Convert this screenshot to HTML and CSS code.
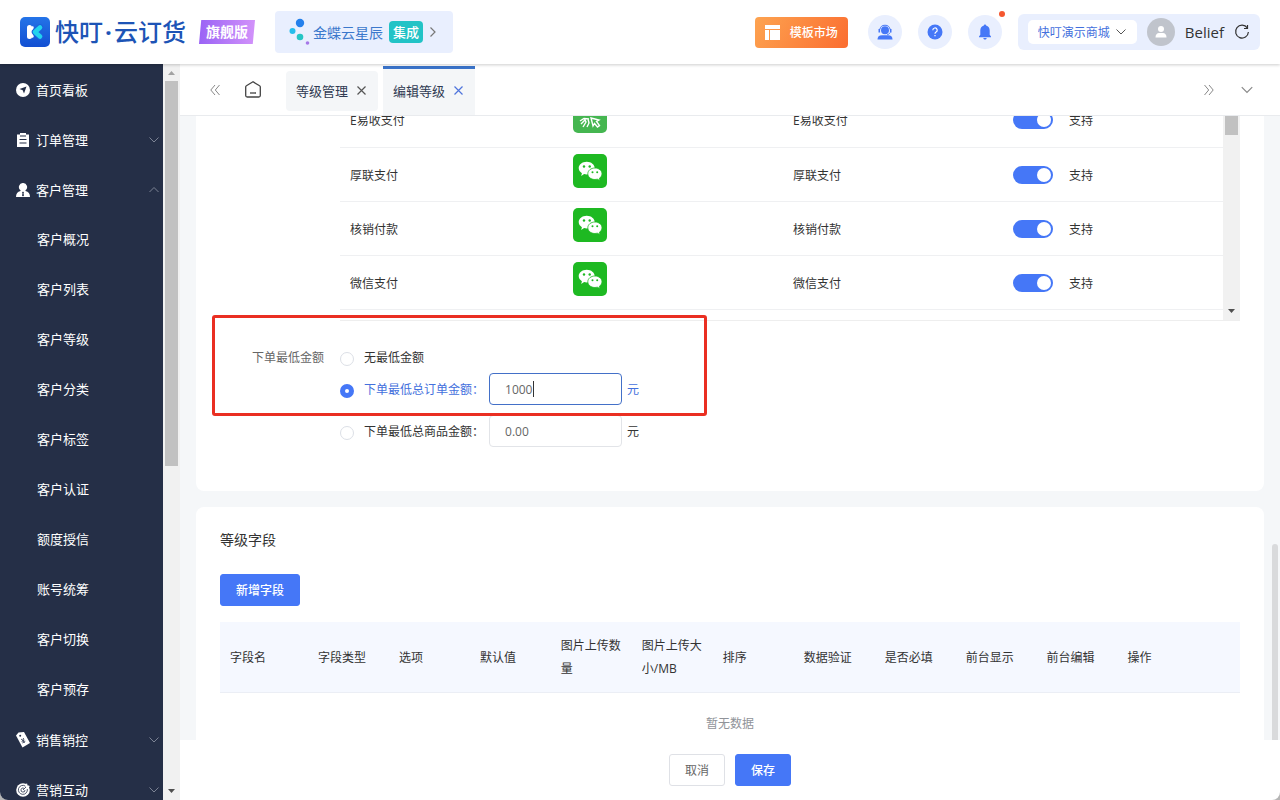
FILE: index.html
```html
<!DOCTYPE html>
<html lang="zh-CN">
<head>
    <meta charset="UTF-8">
    <meta name="viewport" content="width=device-width, initial-scale=1.0">
    <title>编辑等级</title>
    <link rel="stylesheet" href="styles.css">
</head>
<body>
    <svg class="defs" aria-hidden="true">
        <symbol id="down" viewBox="0 0 12 12"><path d="M1.5 3.5 6 8l4.5-4.5" fill="none" stroke="currentColor"/></symbol>
        <symbol id="up" viewBox="0 0 12 12"><path d="M1.5 8 6 3.5 10.5 8" fill="none" stroke="currentColor"/></symbol>
        <symbol id="close" viewBox="0 0 11 11"><path d="m1.5 1.5 8 8m0-8-8 8" fill="none" stroke="currentColor" stroke-width="1.2"/></symbol>
        <symbol id="wechat" viewBox="0 0 34 34">
            <rect width="34" height="34" rx="5" fill="#1eb922"/>
            <path d="M13.7 7.7c4.500 0 8 2.900 8 6.400s-3.500 6.400-8 6.400a10 10 0 0 1-2.600-.4L8.200 22l.7-2.800c-2-1.200-3.200-3-3.200-5.100 0-3.500 3.500-6.400 8-6.400z" fill="#fff"/>
            <path d="M21.900 14c4 0 7.100 2.600 7.100 5.800 0 1.800-1 3.400-2.600 4.500l.6 2.300-2.600-1.400c-.8.200-1.600.3-2.500.3-4 0-7.100-2.500-7.100-5.700S17.900 14 21.900 14z" fill="#fff" stroke="#1eb922" stroke-width=".8"/>
            <g fill="#1eb922"><circle cx="11" cy="12.500" r="1.200"/><circle cx="16.700" cy="12.500" r="1.200"/><circle cx="19.500" cy="18.300" r="1"/><circle cx="24.200" cy="18.300" r="1"/></g>
        </symbol>
    </svg>

    <div class="app">
        <header class="header">
            <a class="brand" href="#">
                <svg width="30" height="30" viewBox="0 0 30 30">
                    <defs><linearGradient id="lg" x1="0" y1="0" x2="0" y2="1"><stop offset="0" stop-color="#2474e8"/><stop offset="1" stop-color="#124fd2"/></linearGradient></defs>
                    <rect width="30" height="30" rx="5" fill="url(#lg)"/>
                    <path d="M9.500 10.500v9" stroke="#fff" stroke-width="5" stroke-linecap="round"/>
                    <path d="M12.500 10.500 11 15l1.500 4.500" stroke="#fff" stroke-width="2.500" fill="none" stroke-linecap="round"/>
                    <path d="m20 10.500-5 4.500 5 4.500" stroke="#1a62dc" stroke-width="6.500" fill="none" stroke-linecap="round" stroke-linejoin="round"/>
                    <path d="m20 10.500-5 4.500 5 4.500" stroke="#22d3ee" stroke-width="4.600" fill="none" stroke-linecap="round" stroke-linejoin="round"/>
                </svg>
                <span class="brand-name">快叮<i>·</i>云订货</span>
            </a>
            <span class="edition">旗舰版</span>
            <a class="link-app" href="#">
                <svg width="25" height="32" viewBox="0 0 25 32"><circle cx="12" cy="7" r="4.200" fill="#2480ec"/><circle cx="4.500" cy="15" r="3" fill="#25bdec"/><circle cx="12" cy="21" r="3.300" fill="#25c5c5"/><circle cx="19.500" cy="27" r="1.800" fill="#a678e8"/></svg>
                <span>金蝶云星辰</span>
                <em>集成</em>
                <svg class="arrow" width="8" height="12" viewBox="0 0 8 12"><path d="m1.500 1.500 4.500 4.500-4.500 4.500" fill="none" stroke="#777" stroke-width="1.200"/></svg>
            </a>

            <button class="market" type="button">
                <svg width="15" height="15" viewBox="0 0 15 15" fill="#fff"><path d="M0 0h15v4H0zM0 5h4v10H0zM5 5h10v10H5z"/></svg>
                模板市场
            </button>
            <nav class="tools">
                <button type="button" aria-label="客服">
                    <svg width="16" height="16" viewBox="0 0 16 16"><circle cx="8" cy="6.200" r="4" fill="#4577f7"/><path d="M2.800 5.500a5.300 5.300 0 0 1 10.400 0" fill="none" stroke="#4577f7"/><path d="M2.300 5v3.500M13.700 5v3.500" stroke="#4577f7" stroke-width="1.600"/><path d="M13.200 8.500q-.8 2-3.200 2.300" fill="none" stroke="#4577f7" stroke-width=".8"/><path d="M.5 15.500c0-2.800 1.500-4.300 4.500-4.300h6c3 0 4.500 1.500 4.500 4.300z" fill="#4577f7"/></svg>
                </button>
                <button type="button" aria-label="帮助">
                    <svg width="16" height="16" viewBox="0 0 16 16"><circle cx="8" cy="8" r="7.500" fill="#4577f7"/><path d="M5.800 6.200a2.200 2.200 0 1 1 3.300 1.900c-.8.500-1.100.8-1.100 1.700M8 11v1.300" fill="none" stroke="#fff" stroke-width="1.200"/></svg>
                </button>
                <button class="has-news" type="button" aria-label="消息">
                    <svg width="16" height="16" viewBox="0 0 16 16" fill="#4577f7"><path d="M8 .5c.7 0 1 .4 1.100 1 2.300.6 3.600 2.500 3.600 5v4.300l1.300 1.700v.7H2v-.7l1.300-1.700V6.500c0-2.500 1.300-4.400 3.600-5 .1-.6.4-1 1.100-1zM6.300 14h3.400c-.2 1-.8 1.500-1.700 1.500S6.500 15 6.300 14z"/></svg>
                </button>
            </nav>
            <div class="account">
                <div class="shop">
                    <select aria-label="商城"><option>快叮演示商城</option></select>
                    <svg width="12" height="12"><use href="#down"/></svg>
                </div>
                <svg class="avatar" width="28" height="28" viewBox="0 0 28 28"><circle cx="14" cy="14" r="14" fill="#c0c4cc"/><circle cx="14" cy="11" r="3" fill="#fff"/><path d="M8.500 19.500c0-3 1.500-4.500 3.500-4.500h4c2 0 3.500 1.500 3.500 4.500z" fill="#fff"/></svg>
                <span class="user">Belief</span>
                <button class="refresh" type="button" aria-label="刷新">
                    <svg width="16" height="16" viewBox="0 0 16 16"><path d="M13.300 4A6.400 6.400 0 1 0 14.400 8M13.500 1v3.500H10" fill="none" stroke="#333" stroke-width="1.200"/></svg>
                </button>
            </div>
        </header>

        <div class="body">
            <aside class="sidebar">
                <nav class="menu">
                    <a class="item" href="#"><svg width="14" height="14" viewBox="0 0 14 14"><circle cx="7" cy="7" r="7" fill="#fff"/><path d="m10.500 3.500-2.500 7-1.300-3.200L3.500 6z" fill="#252f47"/></svg>首页看板</a>
                    <a class="item" href="#"><svg width="14" height="14" viewBox="0 0 14 14"><path d="M1 1.500h3V0h6v1.500h3V14H1z" fill="#fff"/><path d="M4 3h6M3.500 6.500h7M3.500 10h7" stroke="#252f47" stroke-width="1.200"/></svg>订单管理<svg class="fold" width="12" height="12"><use href="#down"/></svg></a>
                    <a class="item" href="#"><svg width="14" height="14" viewBox="0 0 14 14"><path d="M7 0a4 4 0 0 1 2.500 7.200V8c3 .6 4.500 2.500 4.500 6H0c0-3.500 1.500-5.400 4.500-6v-.8A4 4 0 0 1 7 0z" fill="#fff"/><path d="m7 8.500 1 1-.5 1 .5 2-1 1-1-1 .5-2-.5-1z" fill="#252f47"/></svg>客户管理<svg class="fold" width="12" height="12"><use href="#up"/></svg></a>
                    <a class="item sub" href="#">客户概况</a>
                    <a class="item sub" href="#">客户列表</a>
                    <a class="item sub" href="#">客户等级</a>
                    <a class="item sub" href="#">客户分类</a>
                    <a class="item sub" href="#">客户标签</a>
                    <a class="item sub" href="#">客户认证</a>
                    <a class="item sub" href="#">额度授信</a>
                    <a class="item sub" href="#">账号统筹</a>
                    <a class="item sub" href="#">客户切换</a>
                    <a class="item sub" href="#">客户预存</a>
                    <a class="item" href="#"><svg width="14" height="16" viewBox="0 0 14 16"><path d="M0 3.500 2.500.5 8 0l6 11-7.500 4.500z" fill="#fff"/><circle cx="4.200" cy="3.700" r="1" fill="#252f47"/><path d="m5 7 2 1.500L7.500 6M7 8.500 8.500 11M5.500 9.700l3-1.700M6.300 11l3-1.700" stroke="#252f47" fill="none" stroke-width=".8"/></svg>销售销控<svg class="fold" width="12" height="12"><use href="#down"/></svg></a>
                    <a class="item" href="#"><svg width="14" height="14" viewBox="0 0 14 14"><circle cx="7" cy="7" r="6.800" fill="#fff"/><path d="M9.500 3.200A4.500 4.500 0 1 0 11.300 6M8 5.300A2 2 0 1 0 9 7M7 7l5.500-5.500" stroke="#252f47" fill="none" stroke-width=".8"/><path d="m11 0 .5 2.500L14 3l-2 2-2-.5L9.500 2z" fill="#fff"/></svg>营销互动<svg class="fold" width="12" height="12"><use href="#down"/></svg></a>
                </nav>
                <div class="bar">
                    <svg width="17" height="17" viewBox="0 0 17 17"><path d="m5 11 3.500-4 3.500 4z" fill="#a3a3a3"/></svg>
                    <div class="thumb menu-thumb"></div>
                    <svg class="bar-end" width="17" height="17" viewBox="0 0 17 17"><path d="m5 6 3.500 4L12 6z" fill="#505050"/></svg>
                </div>
            </aside>

            <main class="main">
                <div class="tabs">
                    <button class="icon-btn" type="button" aria-label="向左"><svg width="10" height="12" viewBox="0 0 10 12"><path d="M5 1 .8 6 5 11M9.500 1 5.300 6l4.200 5" fill="none" stroke="currentColor"/></svg></button>
                    <a class="home" href="#" aria-label="首页"><svg width="16" height="17" viewBox="0 0 16 17"><path d="M8 .8 1.400 4.800Q.7 5.200.7 6v8.500q0 1.500 1.500 1.500h11.600q1.500 0 1.500-1.500V6q0-.8-.7-1.200z" fill="none" stroke="#444" stroke-width="1.300"/><path d="M5 12h6" stroke="#444" stroke-width="1.300"/></svg></a>
                    <div class="tab-list">
                        <div class="tab"><a href="#">等级管理</a><button class="close" type="button" aria-label="关闭等级管理"><svg width="11" height="11"><use href="#close"/></svg></button></div>
                        <div class="tab active"><a href="#">编辑等级</a><button class="close" type="button" aria-label="关闭编辑等级"><svg width="11" height="11"><use href="#close"/></svg></button></div>
                    </div>
                    <button class="icon-btn" type="button" aria-label="向右"><svg width="10" height="12" viewBox="0 0 10 12"><path d="m.5 1 4.200 5L.5 11M5 1l4.200 5L5 11" fill="none" stroke="currentColor"/></svg></button>
                    <button class="icon-btn" type="button" aria-label="更多"><svg width="16" height="14"><use href="#down"/></svg></button>
                </div>

                <div class="content">
                    <section class="card">
                        <div class="pay">
                            <table class="pay-table">
                                <tr>
                                    <td class="pay-name">E易收支付</td>
                                    <td><svg class="pay-icon" width="34" height="34" viewBox="0 0 34 34"><rect width="34" height="34" rx="5" fill="#45b650"/><path d="m7 22 4-2.500 5 .5M8 25l4-4 1 2-3 5M15 20l1 4-2 4M18 19l8 2-2.500 1.500 3 4-2 1.500-3-3.500L20 27z" fill="none" stroke="#fff" stroke-width="1.400"/></svg></td>
                                    <td>E易收支付</td>
                                    <td><label class="switch"><input type="checkbox" checked>支持</label></td>
                                </tr>
                                <tr>
                                    <td>厚联支付</td>
                                    <td><svg class="pay-icon" width="34" height="34"><use href="#wechat"/></svg></td>
                                    <td>厚联支付</td>
                                    <td><label class="switch"><input type="checkbox" checked>支持</label></td>
                                </tr>
                                <tr>
                                    <td>核销付款</td>
                                    <td><svg class="pay-icon" width="34" height="34"><use href="#wechat"/></svg></td>
                                    <td>核销付款</td>
                                    <td><label class="switch"><input type="checkbox" checked>支持</label></td>
                                </tr>
                                <tr>
                                    <td>微信支付</td>
                                    <td><svg class="pay-icon" width="34" height="34"><use href="#wechat"/></svg></td>
                                    <td>微信支付</td>
                                    <td><label class="switch"><input type="checkbox" checked>支持</label></td>
                                </tr>
                            </table>
                            <div class="bar">
                                <div class="thumb pay-thumb"></div>
                                <svg class="bar-end" width="17" height="17" viewBox="0 0 17 17"><path d="m5 6 3.500 4L12 6z" fill="#505050"/></svg>
                            </div>
                        </div>

                        <div class="form-item" role="radiogroup" aria-labelledby="min-label">
                            <span class="form-label" id="min-label">下单最低金额</span>
                            <div class="options">
                                <div class="option">
                                    <label><input type="radio" name="min">无最低金额</label>
                                </div>
                                <div class="option checked">
                                    <label><input type="radio" name="min" checked>下单最低总订单金额：</label>
                                    <span class="amount focused"><input type="text" value="1000" aria-label="下单最低总订单金额"></span>元
                                </div>
                                <div class="option spaced">
                                    <label><input type="radio" name="min">下单最低总商品金额：</label>
                                    <span class="amount"><input type="text" value="0.00" aria-label="下单最低总商品金额"></span>元
                                </div>
                            </div>
                            <div class="mark"></div>
                        </div>
                    </section>

                    <section class="card fields">
                        <h2>等级字段</h2>
                        <button class="btn primary" type="button">新增字段</button>
                        <table class="field-table">
                            <thead>
                                <tr>
                                    <th class="first">字段名</th>
                                    <th>字段类型</th>
                                    <th>选项</th>
                                    <th>默认值</th>
                                    <th>图片上传数量</th>
                                    <th>图片上传大小/MB</th>
                                    <th>排序</th>
                                    <th>数据验证</th>
                                    <th>是否必填</th>
                                    <th>前台显示</th>
                                    <th>前台编辑</th>
                                    <th class="last">操作</th>
                                </tr>
                            </thead>
                            <tbody>
                                <tr><td class="empty" colspan="12">暂无数据</td></tr>
                            </tbody>
                        </table>
                    </section>
                    <div class="page-thumb"></div>
                </div>

                <footer class="footer">
                    <button class="btn" type="button">取消</button>
                    <button class="btn primary" type="button">保存</button>
                </footer>
            </main>
        </div>
    </div>
</body>
</html>
```
FILE: styles.css
```css
* {
    margin: 0;
    padding: 0;
    box-sizing: border-box;
}

body {
    background-color: #b5b5b5;
    color: #333;
    font-family: "Open Sans", "Noto Sans CJK SC", sans-serif;
    font-size: 12px;
}

a {
    color: inherit;
    text-decoration: none;
}

svg {
    display: block;
    flex-shrink: 0;
}

button,
input,
select {
    font: inherit;
    color: inherit;
    border: none;
    background: none;
    outline: none;
}

.defs {
    position: absolute;
    width: 0;
    height: 0;
}

.app {
    display: flex;
    flex-direction: column;
    height: 100vh;
    overflow: hidden;
    background-color: #fff;
    border-radius: 0 0 8px 8px;
}

/* header */
.header {
    display: flex;
    align-items: center;
    flex-shrink: 0;
    height: 64px;
    padding: 0 20px;
    position: relative;
    z-index: 1;
    background-color: #fff;
    box-shadow: 0 1px 3px rgba(0, 0, 0, .2);
}

.brand {
    display: flex;
    align-items: center;
    gap: 5px;
}

.brand-name {
    display: flex;
    color: #1d54b6;
    font-size: 24px;
    line-height: 32px;
    font-weight: 500;
}

.brand-name i {
    width: 11px;
    font-style: normal;
    font-weight: 700;
    text-align: center;
}

.edition {
    width: 56px;
    margin-left: 13px;
    line-height: 24px;
    color: #fff;
    font-size: 14px;
    font-weight: 700;
    text-align: center;
    background-image: linear-gradient(90deg, #9a63f5, #d292fa);
    clip-path: polygon(4% 0, 100% 0, 96% 100%, 0 100%);
}

.link-app {
    display: flex;
    align-items: center;
    height: 42px;
    margin-left: 20px;
    padding: 0 16px 0 13px;
    color: #3b78cc;
    font-size: 14px;
    background-color: #e9effe;
    border-radius: 4px;
}

.link-app em {
    margin: 0 6px;
    padding: 0 4px;
    line-height: 22px;
    color: #fff;
    font-size: 13px;
    font-weight: 500;
    font-style: normal;
    background-color: #22c3c6;
    border-radius: 4px;
}

.market {
    display: flex;
    align-items: center;
    gap: 10px;
    height: 31px;
    margin-left: auto;
    padding: 0 10px;
    color: #fff;
    font-weight: 500;
    background-image: linear-gradient(120deg, #fda350, #fb6d30);
    border-radius: 4px;
}

.tools {
    display: flex;
    gap: 16px;
    margin: 0 16px 0 20px;
}

.tools button {
    display: flex;
    align-items: center;
    justify-content: center;
    width: 34px;
    height: 34px;
    position: relative;
    background-color: #e9effe;
    border-radius: 50%;
}

.has-news::after {
    content: "";
    position: absolute;
    top: -4px;
    right: -3px;
    width: 6px;
    height: 6px;
    background-color: #f5572f;
    border-radius: 50%;
}

.account {
    display: flex;
    align-items: center;
    gap: 10px;
    height: 36px;
    padding: 0 10px;
    background-color: #e9effe;
    border-radius: 6px;
}

.shop {
    display: flex;
    align-items: center;
    position: relative;
    color: #555;
    background-color: #fff;
    border-radius: 5px;
}

.shop select {
    height: 24px;
    padding: 0 26px 0 10px;
    color: #4370dd;
    appearance: none;
}

.shop svg {
    position: absolute;
    right: 10px;
    pointer-events: none;
}

.user {
    font-size: 15px;
}

.refresh {
    cursor: pointer;
}

/* layout */
.body {
    display: flex;
    flex: 1;
    min-height: 0;
}

.sidebar {
    display: flex;
    width: 180px;
    flex-shrink: 0;
    background-color: #252f47;
}

.menu {
    flex: 1;
    overflow: hidden;
}

.item {
    display: flex;
    align-items: center;
    gap: 6px;
    height: 50px;
    padding: 0 3px 0 16px;
    color: #fff;
    font-size: 13px;
}

.item svg {
    margin-top: 2px;
}

.sub {
    padding-left: 37px;
    padding-bottom: 2px;
}

.fold {
    margin-left: auto;
    color: #7c8394;
}

.bar {
    display: flex;
    flex-direction: column;
    width: 17px;
    flex-shrink: 0;
    background-color: #f1f1f1;
}

.thumb {
    margin: 0 2px;
    flex-shrink: 0;
    background-color: #c1c1c1;
}

.menu-thumb {
    height: 385px;
}

.pay-thumb {
    height: 19px;
}

.bar-end {
    margin-top: auto;
}

.main {
    display: flex;
    flex-direction: column;
    flex: 1;
    min-width: 0;
}

/* tabs */
.tabs {
    display: flex;
    align-items: center;
    gap: 25px;
    height: 52px;
    flex-shrink: 0;
    padding: 0 25px 0 30px;
    border-bottom: 1px solid #e9ebee;
}

.icon-btn {
    color: #888;
}

.close {
    color: #555;
}

.tab-list {
    display: flex;
    align-items: center;
    gap: 5px;
    flex: 1;
    height: 100%;
    padding-top: 2px;
}

.tab {
    display: flex;
    align-items: center;
    gap: 8px;
    height: 40px;
    padding: 0 11px 0 10px;
    color: #303a52;
    font-size: 13px;
    background-color: #f4f6f8;
    border-radius: 4px;
}

.tab.active {
    align-self: flex-end;
    height: 49px;
    padding-bottom: 3px;
    border-top: 3px solid #3a73c9;
    border-radius: 0;
}

.tab.active .close {
    color: #4f74dc;
}

/* content */
.content {
    flex: 1;
    min-height: 0;
    padding: 0 16px;
    position: relative;
    overflow: hidden;
    background-color: #f5f7f9;
}

.card {
    padding: 0 24px 44px;
    background-color: #fff;
    border-radius: 0 0 8px 8px;
}

.pay {
    display: flex;
    height: 205px;
    margin-left: 120px;
    overflow: hidden;
    border-bottom: 1px solid #eee;
}

/* first row is partly scrolled out of view */
.pay-table {
    width: 100%;
    height: 216px;
    margin-top: -23px;
    table-layout: fixed;
    border-collapse: collapse;
}

.pay-table td {
    height: 54px;
    padding: 1px 10px 0;
    border-bottom: 1px solid #eff0f2;
}

.pay-table .pay-name {
    width: 223px;
}

.pay-table td:nth-child(2) {
    padding-bottom: 8px;
}

.switch {
    display: flex;
    align-items: center;
    gap: 16px;
}

.switch input {
    width: 40px;
    height: 18px;
    appearance: none;
    background-color: #4577f7;
    border-radius: 9px;
}

.switch input::before {
    content: "";
    display: block;
    width: 14px;
    height: 14px;
    margin: 2px 2px 2px auto;
    background-color: #fff;
    border-radius: 50%;
}

.form-item {
    display: flex;
    margin-top: 20px;
    position: relative;
}

.form-label {
    width: 120px;
    padding-right: 16px;
    line-height: 34px;
    color: #666;
    text-align: right;
}

.option {
    display: flex;
    align-items: center;
    height: 32px;
}

.option label {
    display: flex;
    align-items: center;
    gap: 10px;
}

.option.checked {
    color: #4370dd;
}

.option.spaced {
    margin-top: 10px;
}

.option input[type="radio"] {
    width: 14px;
    height: 14px;
    margin-top: 4px;
    appearance: none;
    border: 1px solid #dcdfe6;
    border-radius: 50%;
}

.option input[type="radio"]:checked {
    background-color: #fff;
    border: 5px solid #4577f7;
}

.amount {
    margin: 0 5px;
    position: relative;
}

.amount input {
    display: block;
    width: 133px;
    height: 32px;
    padding: 0 15px;
    color: #666;
    border: 1px solid #e2e4e8;
    border-radius: 4px;
}

.amount.focused input {
    border-color: #4370c8;
    caret-color: transparent;
}

.amount.focused::after {
    content: "";
    position: absolute;
    top: 8px;
    left: 44px;
    width: 1px;
    height: 16px;
    background-color: #333;
}

.mark {
    position: absolute;
    top: -26px;
    left: -8px;
    width: 495px;
    height: 101px;
    border: 3px solid #ea2f22;
    border-radius: 3px;
    pointer-events: none;
}

.fields {
    margin-top: 16px;
    padding-top: 22px;
    border-radius: 8px 8px 0 0;
}

.fields h2 {
    margin-bottom: 23px;
    font-size: 14px;
    line-height: 22px;
    font-weight: 400;
}

.btn {
    height: 32px;
    padding: 0 15px;
    color: #666;
    background-color: #fff;
    border: 1px solid #dfe1e6;
    border-radius: 3px;
}

.btn.primary {
    color: #fff;
    font-weight: 500;
    background-color: #4577f7;
    border-color: #4577f7;
}

.field-table {
    width: 100%;
    margin-top: 16px;
    table-layout: fixed;
    border-collapse: collapse;
}

.field-table th {
    padding: 12px 10px;
    font-weight: 400;
    line-height: 23px;
    text-align: left;
    background-color: #f5f8ff;
    border-bottom: 1px solid #ebeef5;
}

.field-table .first {
    width: 88px;
}

.field-table .last {
    width: 12%;
}

.field-table .empty {
    height: 60px;
    color: #909399;
    text-align: center;
}

.page-thumb {
    position: absolute;
    right: 2px;
    bottom: 0;
    width: 6px;
    height: 196px;
    background-color: #d9dadc;
    border-radius: 3px 3px 0 0;
}

.footer {
    display: flex;
    align-items: center;
    justify-content: center;
    gap: 10px;
    height: 60px;
    flex-shrink: 0;
}
```
